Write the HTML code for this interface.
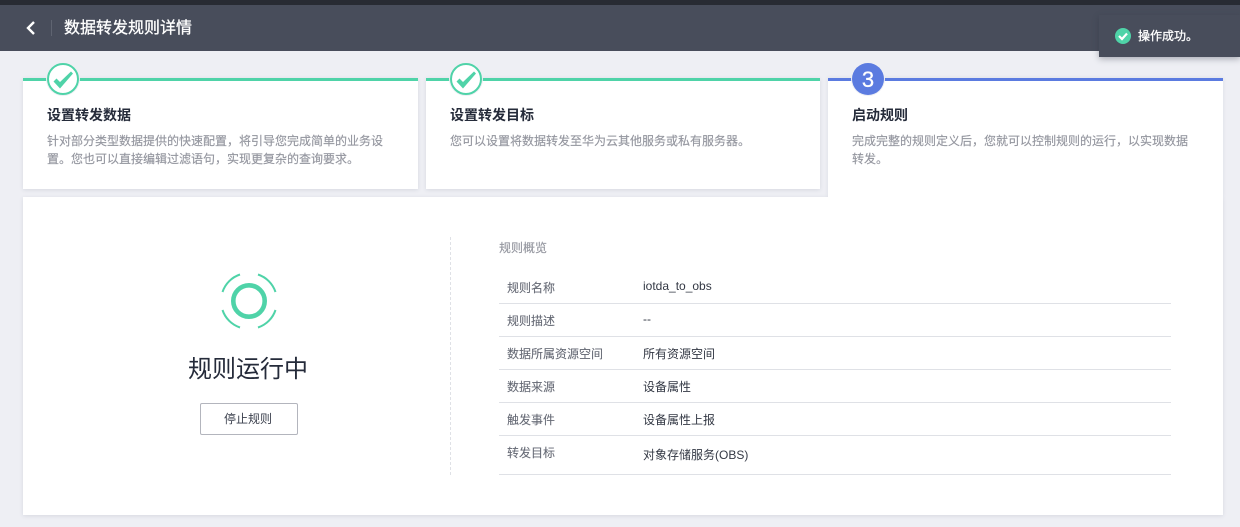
<!DOCTYPE html>
<html lang="zh-CN"><head><meta charset="utf-8"><title>数据转发规则详情</title>
<style>
*{box-sizing:border-box}
html,body{margin:0;padding:0;width:1240px;height:527px;overflow:hidden;background:#eeeff4;font-family:"Liberation Sans","Noto Sans CJK SC",sans-serif;font-size:12px}
.a{position:absolute;white-space:nowrap}
.card{position:absolute;top:78px;height:111px;background:#fff;box-shadow:0 1px 4px rgba(60,70,100,.13)}
.line{position:absolute;left:0;right:0;top:0;height:3px}
.ct{position:absolute;left:24px;top:27px;font-size:14px;line-height:20px;font-weight:700;color:#252b3a;white-space:nowrap}
.cd{position:absolute;left:24px;top:54px;font-size:12px;line-height:18px;color:#94969f;white-space:nowrap;-webkit-text-stroke:.15px #94969f}
.ic{position:absolute;left:23px;top:-16px;width:34px;height:34px}
.lb{position:absolute;left:507px;color:#666a75;line-height:18px;white-space:nowrap;-webkit-text-stroke:.1px #666a75}
.vl{position:absolute;left:643px;color:#333844;line-height:18px;white-space:nowrap}
.hr{position:absolute;left:499px;width:672px;height:1px;background:#dfe1e6}
</style></head><body>
<div class="a" style="left:0;top:0;width:1240px;height:5px;background:#282b33"></div>
<div class="a" style="left:0;top:5px;width:1240px;height:46px;background:#484d5b"></div>
<svg class="a" style="left:24px;top:20px" width="14" height="16" viewBox="0 0 14 16"><path d="M10 2 L4 8 L10 14" fill="none" stroke="#fff" stroke-width="2.4"/></svg>
<div class="a" style="left:51px;top:20px;width:1px;height:16px;background:#5f6471"></div>
<div class="a" style="left:64px;top:17px;font-size:16px;line-height:24px;color:#fff;-webkit-text-stroke:.3px #fff">数据转发规则详情</div>

<div class="card" style="left:23px;width:395px"><div class="line" style="background:#4fd3a8"></div>
<svg class="ic" viewBox="0 0 34 34"><circle cx="17" cy="17" r="17" fill="#eeeff4"/><circle cx="17" cy="17" r="15" fill="#fff" stroke="#4fd3a8" stroke-width="2"/><path d="M7.5 19.5 L10.5 16.5 L14 20 L25 9.5 L27 11.5 L14 26.5 Z" fill="#4fd3a8"/></svg>
<div class="ct">设置转发数据</div>
<div class="cd">针对部分类型数据提供的快速配置，将引导您完成简单的业务设<br>置。您也可以直接编辑过滤语句，实现更复杂的查询要求。</div></div>

<div class="card" style="left:426px;width:394px"><div class="line" style="background:#4fd3a8"></div>
<svg class="ic" viewBox="0 0 34 34"><circle cx="17" cy="17" r="17" fill="#eeeff4"/><circle cx="17" cy="17" r="15" fill="#fff" stroke="#4fd3a8" stroke-width="2"/><path d="M7.5 19.5 L10.5 16.5 L14 20 L25 9.5 L27 11.5 L14 26.5 Z" fill="#4fd3a8"/></svg>
<div class="ct">设置转发目标</div>
<div class="cd">您可以设置将数据转发至华为云其他服务或私有服务器。</div></div>

<div class="card" style="left:828px;width:395px;height:119px;box-shadow:0 0 4px rgba(60,70,100,.1)"><div class="line" style="background:#5b7be0"></div>
<svg class="ic" viewBox="0 0 34 34"><circle cx="17" cy="17" r="17" fill="#eeeff4"/><circle cx="17" cy="17" r="16" fill="#5b7be0"/></svg>
<div class="a" style="left:23px;top:-15px;width:34px;text-align:center;font-size:22px;line-height:34px;color:#fff;-webkit-text-stroke:.3px #fff">3</div>
<div class="ct">启动规则</div>
<div class="cd">完成完整的规则定义后，您就可以控制规则的运行，以实现数据<br>转发。</div></div>
<div class="a" style="left:23px;top:197px;width:1200px;height:318px;background:#fff;box-shadow:0 1px 4px rgba(60,70,100,.13)"></div>
<div class="a" style="left:828px;top:190px;width:395px;height:12px;background:#fff"></div>

<svg class="a" style="left:219px;top:270.5px" width="60" height="60" viewBox="0 0 60 60"><circle cx="30" cy="30" r="15.7" fill="none" stroke="#4fd3a8" stroke-width="4.6"/><g fill="none" stroke="#4fd3a8" stroke-width="2"><path d="M3.5 21 A27.5 27.5 0 0 1 21 3.5"/><path d="M39 3.5 A27.5 27.5 0 0 1 56.5 21"/><path d="M56.5 39 A27.5 27.5 0 0 1 39 56.5"/><path d="M21 56.5 A27.5 27.5 0 0 1 3.5 39"/></g></svg>
<div class="a" style="left:188px;top:353px;font-size:24px;line-height:34px;color:#252b3a">规则运行中</div>
<div class="a" style="left:200px;top:403px;width:98px;height:32px;border:1px solid #b3b5bd;border-radius:2px;text-align:center;line-height:30px;color:#3a3f4c;padding-right:2px">停止规则</div>
<div class="a" style="left:450px;top:237px;height:238px;border-left:1px dashed #dfe1e6"></div>

<div class="a" style="left:499px;top:239px;color:#94969f;line-height:18px;-webkit-text-stroke:.15px #94969f">规则概览</div>
<div class="lb" style="top:279px">规则名称</div><div class="vl" style="top:277px">iotda_to_obs</div><div class="hr" style="top:303px"></div>
<div class="lb" style="top:312px">规则描述</div><div class="vl" style="top:310px">--</div><div class="hr" style="top:336px"></div>
<div class="lb" style="top:345px">数据所属资源空间</div><div class="vl" style="top:345px">所有资源空间</div><div class="hr" style="top:369px"></div>
<div class="lb" style="top:378px">数据来源</div><div class="vl" style="top:378px">设备属性</div><div class="hr" style="top:402px"></div>
<div class="lb" style="top:411px">触发事件</div><div class="vl" style="top:411px">设备属性上报</div><div class="hr" style="top:435px"></div>
<div class="lb" style="top:444px">转发目标</div><div class="vl" style="top:446px">对象存储服务(OBS)</div><div class="hr" style="top:474px"></div>

<div class="a" style="left:1099px;top:15px;width:141px;height:42px;background:#484d5b;box-shadow:0 2px 6px rgba(40,45,60,.35)"></div>
<svg class="a" style="left:1115px;top:28px" width="16" height="16" viewBox="0 0 16 16"><circle cx="8" cy="8" r="8" fill="#4fd3a8"/><path d="M4 8 L7 11 L12 5.5" fill="none" stroke="#fff" stroke-width="2.2"/></svg>
<div class="a" style="left:1138px;top:27px;color:#fff;line-height:18px;font-size:12px;-webkit-text-stroke:.3px #fff">操作成功。</div>
</body></html>
